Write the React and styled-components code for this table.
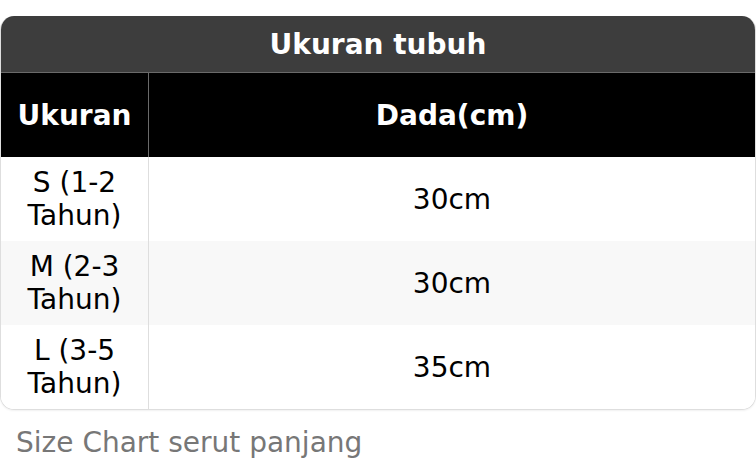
import React from "react";
import styled, { createGlobalStyle } from "styled-components";

const rows = [
  { size: "S (1-2 Tahun)", chest: "30cm" },
  { size: "M (2-3 Tahun)", chest: "30cm" },
  { size: "L (3-5 Tahun)", chest: "35cm" },
];

const App = () => {
  return (
    <>
      <GlobalStyle />
      <Page>
        <Card>
          <Title>Ukuran tubuh</Title>
          <Grid>
            <HeadCell first>Ukuran</HeadCell>
            <HeadCell>Dada(cm)</HeadCell>
            {rows.map((row, index) => (
              <React.Fragment key={index}>
                <Cell first striped={index % 2 === 1}>
                  {row.size}
                </Cell>
                <Cell striped={index % 2 === 1}>{row.chest}</Cell>
              </React.Fragment>
            ))}
          </Grid>
        </Card>
        <Caption>Size Chart serut panjang</Caption>
      </Page>
    </>
  );
};

export default App;

const GlobalStyle = createGlobalStyle`
  body {
    margin: 0;
    background: #fff;
    font-family: "DejaVu Sans", "Liberation Sans", sans-serif;
  }
`;

const Page = styled.div`
  padding-top: 16px;
`;

const Card = styled.div`
  border: 1px solid #dedede;
  border-top: none;
  border-radius: 14px;
  overflow: hidden;
  box-shadow: 0 1px 2px rgba(0, 0, 0, 0.06);
`;

const Title = styled.div`
  height: 56px;
  background: #3d3d3d;
  color: #fff;
  font-weight: bold;
  font-size: 28px;
  display: flex;
  align-items: center;
  justify-content: center;
  border-bottom: 1px solid #6a6a6a;
`;

const Grid = styled.div`
  display: grid;
  grid-template-columns: 148px 1fr;
`;

const HeadCell = styled.div`
  height: 84px;
  background: #000;
  color: #fff;
  font-weight: bold;
  font-size: 28px;
  display: flex;
  align-items: center;
  justify-content: center;
  border-right: ${(p) => (p.first ? "1px solid #6a6a6a" : "none")};
`;

const Cell = styled.div`
  height: 84px;
  background: ${(p) => (p.striped ? "#f8f8f8" : "#fff")};
  color: #000;
  font-size: 28px;
  line-height: 33px;
  text-align: center;
  display: flex;
  align-items: center;
  justify-content: center;
  padding: 0 ${(p) => (p.first ? "14px" : "0")};
  border-right: ${(p) => (p.first ? "1px solid #dedede" : "none")};
`;

const Caption = styled.div`
  margin-top: 16px;
  padding-left: 16px;
  font-size: 28px;
  line-height: 33px;
  color: #777;
`;
